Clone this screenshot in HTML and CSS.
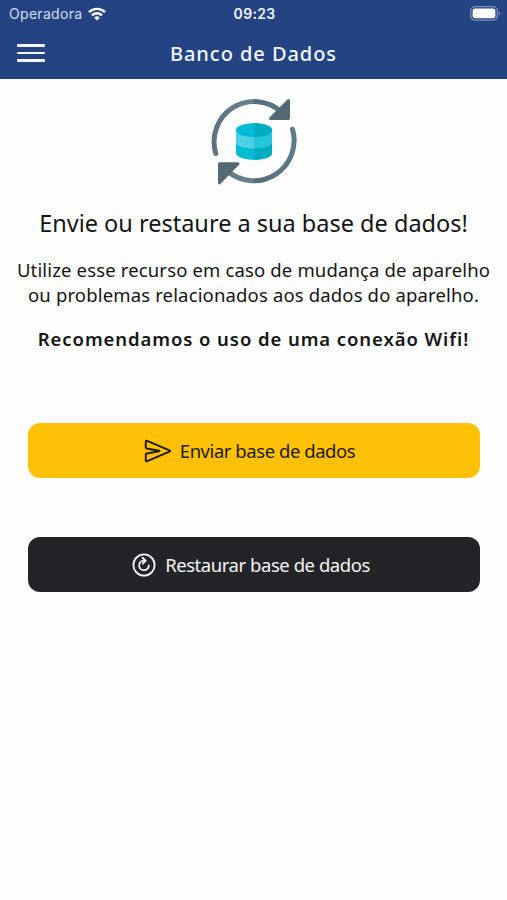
FILE: index.html
```html
<!DOCTYPE html>
<html lang="pt-BR">
<head>
    <meta charset="UTF-8">
    <meta name="viewport" content="width=device-width, initial-scale=1.0">
    <title>Banco de Dados</title>
    <link rel="stylesheet" href="styles.css">
</head>
<body>
    <header class="header">
        <div class="status-bar">
            <div class="carrier">
                <span class="carrier-name">Operadora</span>
                <svg class="wifi" viewBox="0 0 18 14" width="18" height="14" fill="none" stroke="#fff" stroke-width="2.4">
                    <path d="M1 5.2a11.4 11.4 0 0 1 16 0"/>
                    <path d="M4 8.3a7.1 7.1 0 0 1 10 0"/>
                    <path d="M9 13.6L6.2 10.7a4 4 0 0 1 5.6 0z" fill="#fff" stroke="none"/>
                </svg>
            </div>
            <span class="clock">09:23</span>
            <svg class="battery" viewBox="0 0 31 15" width="31" height="15">
                <rect x="0.7" y="0.7" width="26.6" height="13.4" rx="4" fill="none" stroke="#7e92bb" stroke-width="1.2"/>
                <rect x="2.6" y="2.6" width="22.8" height="9.6" rx="2.2" fill="#fff"/>
                <path d="M28.7 5.2q3 2.2 0 4.4z" fill="#7e92bb"/>
            </svg>
        </div>
        <div class="nav-bar">
            <button class="menu" aria-label="Menu">
                <span></span>
                <span></span>
                <span></span>
            </button>
            <h1>Banco de Dados</h1>
        </div>
    </header>

    <main class="content">
        <svg class="sync-logo" viewBox="0 0 90 90" width="90" height="90">
            <defs>
                <linearGradient id="steel" x1="0" y1="0" x2="90" y2="0" gradientUnits="userSpaceOnUse">
                    <stop offset="0" stop-color="#5c727e"/>
                    <stop offset="0.49" stop-color="#688190"/>
                    <stop offset="0.5" stop-color="#546d7a"/>
                    <stop offset="1" stop-color="#607b89"/>
                </linearGradient>
            </defs>
            <g fill="none" stroke="url(#steel)" stroke-width="5" stroke-linecap="round">
                <path d="M6.8 57.5A40.3 40.3 0 0 1 72.5 16"/>
                <path d="M83.5 33.2A40.3 40.3 0 0 1 18.5 75"/>
            </g>
            <g fill="#536974" stroke="#536974" stroke-width="3" stroke-linejoin="round">
                <path d="M79.5 4.5v18h-18z"/>
                <path d="M10.5 67.8H29l-18.500 19z"/>
            </g>
            <!-- database cylinder, right half shaded -->
            <path d="M27 34c0-9 36-9 36 0v23c0 9-36 9-36 0z" fill="#00bcd4"/>
            <path d="M45 27.2c9 0 18 2.3 18 6.8v23c0 4.5-9 6.8-18 6.8z" fill="#00acc1"/>
            <path d="M27 34.500c1.500 6 13 6.500 18 6.500v11.500c-9 0-18-2-18-6.500z" fill="#4dd0e1"/>
            <path d="M63 34.500c-1.500 6-13 6.500-18 6.500v11.500c9 0 18-2 18-6.500z" fill="#26c6da"/>
        </svg>

        <h2>Envie ou restaure a sua base de dados!</h2>
        <p class="description">
            Utilize esse recurso em caso de mudança de aparelho<br>
            ou problemas relacionados aos dados do aparelho.
        </p>
        <p class="warning">Recomendamos o uso de uma conexão Wifi!</p>

        <button class="btn btn-send">
            <svg viewBox="0 0 28 24" width="28" height="24" fill="none" stroke="#211a00" stroke-width="2" stroke-linejoin="round">
                <path d="M1.8 2.800q0-1.500 1.400-.9L25.500 11.300q1.300.7 0 1.400L3.200 22.100q-1.400.6-1.400-.9v-5.500q0-.9.9-1.100L15 12.300q1-.3 0-.6L2.700 9.400q-.9-.2-.9-1.100z"/>
            </svg>
            <span>Enviar base de dados</span>
        </button>
        <button class="btn btn-restore">
            <svg viewBox="0 0 24 24" width="24" height="24" fill="none" stroke="#f4f4f4" stroke-width="1.8" stroke-linecap="round">
                <circle cx="12" cy="12" r="10.6"/>
                <path d="M12 7.600A4.800 4.800 0 1 0 16.800 12.400"/>
                <path d="M10.500 4.800l3.300 2.900-3.100 3" stroke-linejoin="round"/>
            </svg>
            <span>Restaurar base de dados</span>
        </button>
    </main>
</body>
</html>
```
FILE: styles.css
```css
* {
    box-sizing: border-box;
}

body {
    margin: 0;
    min-height: 900px;
    background-color: #fdfdfd;
    font-family: "Noto Sans", sans-serif;
    color: #151515;
}

.header {
    height: 79px;
    background-color: #244382;
    color: #f4f7ff;
}

.status-bar {
    display: grid;
    grid-template-columns: 1fr auto 1fr;
    align-items: center;
    height: 27px;
    padding: 0 6px 0 8px;
    font-family: Inter, sans-serif;
    font-size: 14px;
}

.carrier {
    display: flex;
    align-items: center;
    gap: 6px;
}

.carrier-name {
    padding-left: 1px;
    color: #d3dcef;
    letter-spacing: 0.3px;
}

.clock {
    font-weight: 600;
    letter-spacing: 0.3px;
}

.battery {
    justify-self: end;
}

.nav-bar {
    display: grid;
    grid-template-columns: 28px 1fr 28px;
    align-items: center;
    height: 52px;
    padding: 0 17px;
}

.menu {
    display: flex;
    flex-direction: column;
    gap: 5px;
    padding: 0;
    border: 0;
    background: none;
}

.menu span {
    width: 28px;
    height: 2.4px;
    border-radius: 1px;
    background-color: #f4f7ff;
}

h1 {
    margin: 0;
    font-size: 20px;
    font-weight: 500;
    letter-spacing: 0.95px;
    text-align: center;
}

.content {
    display: flex;
    flex-direction: column;
    align-items: center;
    padding: 17px 28px 0 28px;
    white-space: nowrap;
}

.sync-logo {
    display: block;
}

h2 {
    margin: 20px 0 0;
    font-size: 23.5px;
    font-weight: 400;
    line-height: 34px;
}

.description {
    margin: 18px 0 0;
    font-size: 18.5px;
    line-height: 24.5px;
    letter-spacing: 0.15px;
    text-align: center;
}

.warning {
    margin: 18px 0 0;
    font-size: 18.5px;
    font-weight: 600;
    line-height: 28px;
    letter-spacing: 0.92px;
}

.btn {
    display: flex;
    align-items: center;
    justify-content: center;
    gap: 8px;
    width: 452px;
    height: 55px;
    padding: 0 8px 0 0;
    border: 0;
    border-radius: 12px;
    color: #211a00;
    font-family: inherit;
    font-size: 18.5px;
    letter-spacing: -0.45px;
}

.btn-send {
    margin-top: 70px;
    background-color: #ffc107;
}

.btn-restore {
    gap: 9px;
    margin-top: 59px;
    padding-right: 5px;
    background-color: #222428;
    color: #f4f4f4;
}
```
